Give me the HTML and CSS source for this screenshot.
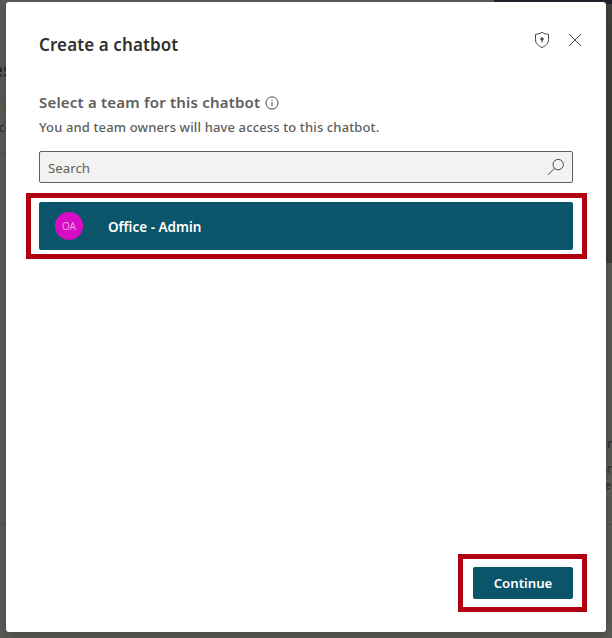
FILE: index.html
```html
<!DOCTYPE html>
<html lang="en">
<head>
<meta charset="utf-8">
<title>Create a chatbot</title>
<link rel="stylesheet" href="styles.css">
</head>
<body>
<div class="backdrop" aria-hidden="true">
  <div class="banner"></div>
  <div class="side-panel"></div>
  <div class="rule rule-top"></div>
  <div class="rule rule-bottom"></div>
  <span class="peek peek-heading">es</span>
  <span class="peek peek-number">2</span>
  <span class="peek peek-text">ce</span>
  <span class="peek peek-ar">ar</span>
  <span class="peek peek-or">or</span>
  <span class="peek peek-e">e</span>
</div>
<main class="dialog" role="dialog" aria-labelledby="title">
  <header class="header">
    <h1 class="title" id="title">Create a chatbot</h1>
    <div class="actions">
      <svg class="shield" viewBox="0 0 16 18" width="16" height="18"><path d="M8 1.4C6 2.7 3.8 3.2 1.5 3.3V8.7C1.5 12.2 4.2 14.8 8 16.5C11.8 14.8 14.5 12.2 14.5 8.7V3.3C12.2 3.2 10 2.7 8 1.4Z"/><circle class="dot" cx="8" cy="8" r="1.7"/><path d="M8 8v3.6"/></svg>
      <svg class="close" viewBox="0 0 14 14" width="14" height="14"><path d="M1 1L13 13M13 1L1 13"/></svg>
    </div>
  </header>
  <div class="subheader">
    <h2 class="subtitle">Select a team for this chatbot</h2>
    <svg class="info" viewBox="0 0 14 14" width="14" height="14"><circle cx="7" cy="7" r="6.1"/><path d="M7 6v4.2M7 3.8v1.1"/></svg>
  </div>
  <p class="description">You and team owners will have access to this chatbot.</p>
  <div class="search">
    <span class="placeholder">Search</span>
    <svg viewBox="0 0 18 18" width="18" height="18"><circle cx="11.2" cy="6.6" r="5.2"/><path d="M7.5 10.3L1 16.8"/></svg>
  </div>
  <div class="highlight team-highlight">
    <div class="team">
      <span class="avatar">OA</span>
      <span class="team-name">Office - Admin</span>
    </div>
  </div>
  <footer class="footer">
    <div class="highlight button-highlight">
      <button class="continue" type="button"><span>Continue</span></button>
    </div>
  </footer>
</main>
</body>
</html>
```

FILE: styles.css
```css
* { box-sizing: border-box; }

body {
  margin: 0;
  width: 612px;
  height: 638px;
  padding: 2px 6px 6px;
  overflow: hidden;
  position: relative;
  background: #5b5a57;
  font-family: "Noto Sans", "Open Sans", sans-serif;
}

svg { display: block; fill: none; stroke: #484644; stroke-width: 1; }

.backdrop { position: absolute; inset: 0; overflow: hidden; }
.banner { position: absolute; left: 494px; right: 0; top: 0; height: 4px; background: #23212b; }
.side-panel { position: absolute; right: 0; top: 4px; width: 10px; height: 259px; background: #403f3c; }
.rule { position: absolute; left: 0; width: 100%; height: 1px; background: #4f4e4c; }
.rule-top { top: 153px; width: 6px; }
.rule-bottom { top: 524px; }
.peek { position: absolute; color: #302f2d; font-size: 12px; line-height: 16px; white-space: nowrap; }
.peek-heading { left: -9px; top: 58px; font-size: 20px; line-height: 24px; font-weight: 700; color: #292b33; }
.peek-number { left: 3px; top: 97px; color: #6e4d20; }
.peek-text { left: -1px; top: 120px; }
.peek-ar { left: 600px; top: 436px; font-weight: 600; }
.peek-or { left: 600px; top: 461px; }
.peek-e { left: 605px; top: 477px; font-size: 11px; }

.dialog {
  position: relative;
  display: flex;
  flex-direction: column;
  width: 600px;
  height: 630px;
  padding: 29px 19px 20px 20px;
  border-radius: 3px;
  background: #fff;
  box-shadow: 0 4px 12px rgba(0, 0, 0, .2);
}

.header {
  display: flex;
  justify-content: space-between;
  height: 60px;
  padding: 0 5px 0 13px;
}
.title { margin: 1px 0 0; font-size: 17px; line-height: 26px; font-weight: 650; color: #323130; letter-spacing: .1px; }
.actions { display: flex; gap: 18px; height: 18px; }
.close { margin-top: 2px; }
.dot { fill: #484644; stroke: none; }

.subheader { display: flex; align-items: center; gap: 5px; height: 22px; margin-left: 13px; }
.subtitle { margin: 0; font-size: 15px; line-height: 22px; font-weight: 650; color: #605e5c; letter-spacing: .2px; }
.info { margin-top: 1px; }
.description { margin: 4px 0 0 13px; font-size: 13px; line-height: 20px; font-weight: 500; color: #605e5c; white-space: nowrap; letter-spacing: .13px; }

.search {
  display: flex;
  align-items: center;
  justify-content: space-between;
  height: 32px;
  margin: 14px 14px 10px 13px;
  padding: 0 7px 0 8px;
  border: 1px solid #605e5c;
  border-radius: 2px;
  background: #f3f2f1;
}
.placeholder { padding-top: 2px; font-size: 13.3px; color: #605e5c; }

.highlight { border: 5px solid #b0000f; }
.team-highlight { height: 66px; padding: 4px 9px 4px 8px; }
.team {
  display: flex;
  align-items: center;
  height: 48px;
  padding-left: 16px;
  border-radius: 2px;
  background: #0b556a;
}
.avatar {
  display: grid;
  place-items: center;
  width: 28px;
  height: 28px;
  border-radius: 50%;
  background: #d60dc4;
  color: #ef9fe8;
  font-size: 10px;
}
.team-name { margin-left: 25px; padding-top: 2px; font-size: 13.5px; font-weight: 600; color: #fff; }

.footer { display: flex; justify-content: flex-end; margin-top: auto; }
.button-highlight { width: 129px; height: 58px; padding: 8px 9px 8px 10px; }
.continue {
  display: grid;
  place-items: center;
  width: 100px;
  height: 32px;
  padding: 0;
  border: 0;
  border-radius: 2px;
  background: #0b556a;
  color: #fff;
  font: 600 13.2px "Noto Sans", sans-serif;
}
```
